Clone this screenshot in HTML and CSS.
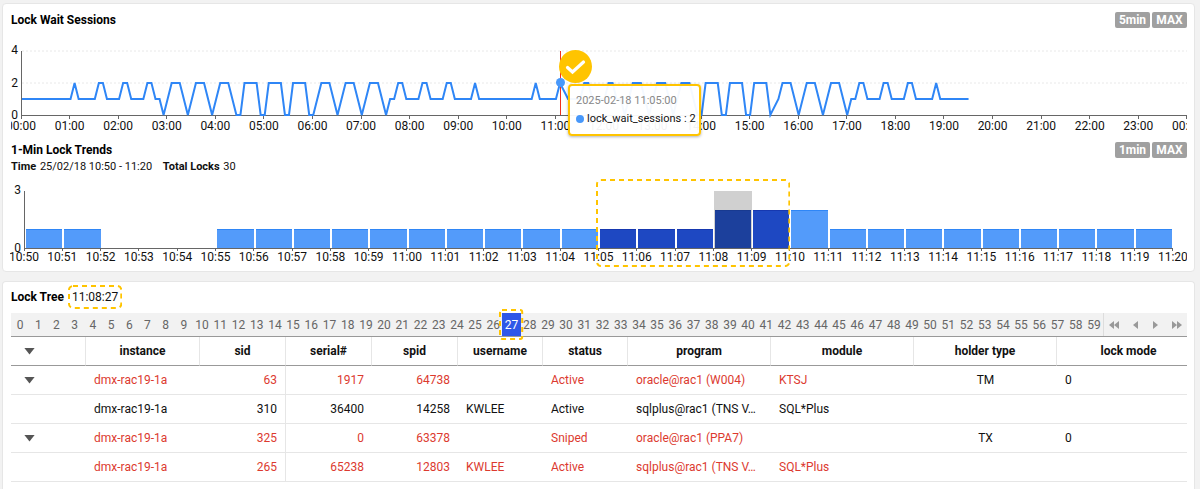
FILE: index.html
```html
<!DOCTYPE html>
<html lang="en">
<head>
<meta charset="utf-8">
<title>Lock Tree</title>
<link rel="stylesheet" href="styles.css">
</head>
<body>
<main class="page">
  <section class="card charts">
    <header class="head">
      <h2 class="title">Lock Wait Sessions</h2>
      <div class="badges"><button class="badge">5min</button><button class="badge">MAX</button></div>
    </header>
    <div class="chart line-chart">
      <div class="y-axis"><span>4</span><span>2</span><span>0</span></div>
      <div class="plot line-plot">
        <svg class="series" viewBox="0 0 288 4" preserveAspectRatio="none" aria-hidden="true">
          <path class="guide" d="M0 0H288M0 2H288"/>
          <polyline class="wave" id="wave"/>
        </svg>
        <div class="cursor">
          <span class="point"></span>
          <svg class="check" viewBox="0 0 33 33" aria-hidden="true"><circle cx="16.500" cy="16.500" r="16.500" fill="#ffc400"/><path d="M8.500 17.500L13.500 22L24.500 12" fill="none" stroke="#fff" stroke-width="3.200" stroke-linecap="round"/></svg>
          <div class="tooltip" role="tooltip">
            <div class="tip-time">2025-02-18 11:05:00</div>
            <div class="tip-row"><span class="dot"></span>lock_wait_sessions : 2</div>
          </div>
        </div>
      </div>
      <div class="x-axis hours"><div class="labels" id="hours"></div></div>
    </div>
    <header class="head second">
      <h2 class="title">1-Min Lock Trends</h2>
      <div class="badges"><button class="badge">1min</button><button class="badge">MAX</button></div>
    </header>
    <p class="summary"><b>Time</b> 25/02/18 10:50 - 11:20 <b class="total">Total Locks</b> 30</p>
    <div class="chart bar-chart">
      <div class="y-axis"><span>3</span><span>0</span></div>
      <div class="plot bar-plot">
        <div class="bars" id="bars"></div>
        <svg class="range" aria-hidden="true"><rect class="dash" x="1" y="1" rx="4"/></svg>
      </div>
      <div class="x-axis"><div class="labels" id="minutes"></div></div>
    </div>
  </section>

  <section class="card tree">
    <header class="tree-head"><h2 class="title">Lock Tree</h2><span class="time">11:08:27<svg class="outline" aria-hidden="true"><rect class="dash" x="1" y="1" rx="4"/></svg></span></header>
    <div class="seconds">
      <div class="ticks" id="ticks"></div>
      <nav class="pager" aria-label="Time navigation">
        <button aria-label="First"><svg width="10" height="8"><path d="M5 0V8L0 4ZM10 0V8L5 4Z"/></svg></button>
        <button aria-label="Previous"><svg width="5" height="8"><path d="M5 0V8L0 4Z"/></svg></button>
        <button aria-label="Next"><svg width="5" height="8"><path d="M0 0V8L5 4Z"/></svg></button>
        <button aria-label="Last"><svg width="10" height="8"><path d="M0 0V8L5 4ZM5 0V8L10 4Z"/></svg></button>
      </nav>
    </div>
    <div class="table-wrap">
      <table class="grid">
        <colgroup><col class="c-tree"><col class="c-inst"><col class="c-num"><col class="c-num"><col class="c-num"><col class="c-text"><col class="c-text"><col class="c-wide"><col class="c-wide"><col class="c-wide"><col></colgroup>
        <thead><tr><th><button class="toggle" aria-label="Toggle all"></button></th><th>instance</th><th>sid</th><th>serial#</th><th>spid</th><th>username</th><th>status</th><th>program</th><th>module</th><th>holder type</th><th>lock mode</th></tr></thead>
        <tbody>
          <tr class="alert"><td><button class="toggle" aria-label="Toggle row"></button></td><td>dmx-rac19-1a</td><td class="num sid">63</td><td class="num">1917</td><td class="num">64738</td><td></td><td>Active</td><td>oracle@rac1 (W004)</td><td>KTSJ</td><td class="holder">TM</td><td class="mode">0</td></tr>
          <tr><td></td><td>dmx-rac19-1a</td><td class="num sid">310</td><td class="num">36400</td><td class="num">14258</td><td>KWLEE</td><td>Active</td><td>sqlplus@rac1 (TNS V…</td><td>SQL*Plus</td><td></td><td></td></tr>
          <tr class="alert"><td><button class="toggle" aria-label="Toggle row"></button></td><td>dmx-rac19-1a</td><td class="num sid">325</td><td class="num">0</td><td class="num">63378</td><td></td><td>Sniped</td><td>oracle@rac1 (PPA7)</td><td></td><td class="holder">TX</td><td class="mode">0</td></tr>
          <tr class="alert"><td></td><td>dmx-rac19-1a</td><td class="num sid">265</td><td class="num">65238</td><td class="num">12803</td><td>KWLEE</td><td>Active</td><td>sqlplus@rac1 (TNS V…</td><td>SQL*Plus</td><td></td><td></td></tr>
        </tbody>
      </table>
    </div>
  </section>
</main>
<script src="app.js"></script>
</body>
</html>
```
FILE: styles.css
```css
* { box-sizing: border-box; }
body { margin: 0; background: #f2f2f2; color: #111; font: 12px/16px Roboto, "Liberation Sans", sans-serif; }
button { margin: 0; padding: 0; border: 0; background: none; font: inherit; color: inherit; }
.page { display: flex; flex-direction: column; gap: 9px; min-height: 100vh; padding: 3px 5px 0 2px; }
.card { background: #fff; border: 1px solid #e6e6e6; border-radius: 4px; padding: 8px 7px 8px 8px; }
.tree { flex: 1; padding: 4px 7px 0 8px; border-bottom: 0; border-radius: 4px 4px 0 0; }
.title { margin: 0; font-size: 12px; line-height: 16px; font-weight: 700; color: #000; }
.head { display: flex; justify-content: space-between; align-items: center; }
.badges { display: flex; gap: 2px; }
.badge { height: 16px; min-width: 35px; border-radius: 2px; background: #a0a0a0; color: #fff; font-weight: 700; line-height: 16px; }

.chart { display: grid; }
.line-chart { grid-template-columns: 10px 1fr; margin-top: 23px; }
.bar-chart { grid-template-columns: 13px 1fr; margin-top: 16px; padding-right: 14px; }
.y-axis { display: flex; flex-direction: column; justify-content: space-between; margin: -9px 3px -7px 0; text-align: right; }
.plot { position: relative; border-left: 1px solid #666; border-bottom: 1px solid #666; }
.line-plot { height: 65px; }
.bar-plot { height: 58px; }
.series { display: block; width: 100%; height: 64px; overflow: visible; }
.guide { stroke: #e8e8e8; stroke-width: 1; stroke-dasharray: 2 2; vector-effect: non-scaling-stroke; }
.wave { fill: none; stroke: #2f86f6; stroke-width: 2; vector-effect: non-scaling-stroke; }
.x-axis { grid-column: 1 / -1; overflow: hidden; }
.line-chart .x-axis { padding-left: 10px; }
.bar-chart .x-axis { margin-right: -14px; margin-left: -1px; padding: 0 14px; }
.labels { display: flex; }
.labels span { flex: 1 1 0; display: flex; flex-direction: column; align-items: center; white-space: nowrap; }
.labels span::before { content: ""; width: 1px; height: 3px; background: #666; }
.hours .labels { margin: 0 calc(-100% / 48); line-height: 14px; }
.bar-chart .labels { margin: 0 calc(-100% / 60); line-height: 12px; }
.bar-chart .labels span::before { height: 2px; }

.cursor { position: absolute; top: 0; bottom: 0; left: calc(100% * 133 / 288); border-left: 1px solid #f03020; }
.point { position: absolute; top: 27px; left: -5px; width: 9px; height: 9px; border-radius: 50%; background: #4898fa; }
.check { position: absolute; left: -2px; top: -1px; width: 33px; height: 33px; }
.tooltip { position: absolute; left: 7px; top: 33px; width: 133px; padding: 6px; border: 2px solid #ffc400; border-radius: 4px; background: rgba(255, 255, 255, .95); box-shadow: 0 1px 3px rgba(0, 0, 0, .3); white-space: nowrap; font-size: 11px; line-height: 18px; }
.tip-time { color: #888; }
.tip-row { display: flex; align-items: center; gap: 3px; }
.dot { flex: none; width: 8px; height: 8px; border-radius: 50%; background: #4898fa; }

.second { margin-top: 9px; }
.summary { margin: 1px 0 0; font-size: 11px; }
.summary b { margin-right: 1px; }
.summary .total { margin-left: 8px; }
.bars { display: grid; grid-template-columns: repeat(30, 1fr); align-items: end; height: 57px; }
.bar { margin: 0 1px; background: #539bfa; border-top: 1px solid #2f86f6; }
.bar.picked { background: #1e48c2; border-color: #1638b0; }
.bar.hot { background: #1c409c; border-color: #183a90; }
.slot { display: flex; flex-direction: column; justify-content: flex-end; height: 100%; }
.slot.hover { background: #d0d0d0; }
.range { position: absolute; left: calc(50% - 3px); top: -12px; width: calc(100% / 6 + 3px); height: 88px; }
.dash { width: calc(100% - 2px); height: calc(100% - 2px); fill: none; stroke: #ffc400; stroke-width: 2; stroke-dasharray: 5 4; }

.tree-head { display: flex; align-items: center; gap: 8px; height: 22px; }
.time { position: relative; }
.outline { position: absolute; left: -4px; top: -4px; width: calc(100% + 8px); height: 24px; }
.seconds { display: flex; margin-top: 5px; height: 24px; background: #f2f2f2; border-bottom: 1px solid #999; color: #666; }
.ticks { flex: 1; display: grid; grid-template-columns: repeat(60, 1fr); }
.ticks button { position: relative; line-height: 22px; }
.ticks .on { background: #2f57e8; color: #fff; }
.ticks .outline { left: -3px; top: -4px; width: calc(100% + 6px); height: 31px; }
.pager { display: flex; width: 84px; border-left: 1px solid #ddd; }
.pager button { flex: 1; display: flex; align-items: center; justify-content: center; fill: #999; }

.table-wrap { overflow: hidden; }
.grid { width: calc(100% + 14px); table-layout: fixed; border-collapse: separate; border-spacing: 0; }
.c-tree { width: 75px; }
.c-inst { width: 114px; }
.c-num { width: 86px; }
.c-text { width: 85px; }
.c-wide { width: 143px; }
.grid th, .grid td { height: 29px; padding: 0 8px; border-bottom: 1px solid #e6e6e6; text-align: left; white-space: nowrap; overflow: hidden; }
.grid th { border-bottom-color: #999; border-right: 1px solid #e6e6e6; text-align: center; color: #111; }
.grid th:first-child, .grid td:first-child { padding: 0 13px; text-align: left; }
.grid .num { text-align: right; }
.grid .sid { border-right: 1px solid #e6e6e6; }
.grid .holder { text-align: center; }
.alert { color: #dc3a2f; }
.alert .holder, .alert .mode { color: #111; }
.toggle { display: block; width: 11px; height: 7px; background: #555; clip-path: polygon(0 0, 100% 0, 50% 100%); }
```
FILE: app.js
```js
const wave = [
  [0,1],[12,1],[13,2],[14,1],[18,1],[19,2],[20,2],[21,1],[24,1],[25,2],[26,2],[27,1],[30,1],[31,2],[32,2],[33,1],[34,1],[35,0],
  [37,2],[39,2],[41,0],[43,2],[45,2],[47,0],[49,2],[51,2],[53,0],[54,0],[55,2],[58,2],[59,0],[60,0],[61,2],[64,2],[65,0],[66,0],
  [67,2],[70,2],[71,0],[72,0],[74,2],[76,2],[78,0],[80,2],[82,2],[84,0],[86,2],[88,2],[90,0],[91,1],[92,1],[93,2],[94,2],[95,1],
  [98,1],[99,2],[100,2],[101,1],[104,1],[105,2],[106,2],[107,1],[111,1],[112,2],[113,1],[126,1],[127,2],[128,1],[132,1],[133,2],
  [135,1],[138,1],[139,2],[140,2],[141,1],[144,1],[145,2],[146,2],[147,1],[148,1],[149,0],[151,2],[153,2],[155,0],[157,2],[159,2],
  [161,0],[163,2],[165,2],[167,0],[168,0],[169,2],[172,2],[173,0],[174,0],[175,2],[178,2],[179,0],[180,0],[181,2],[184,2],[185,0],
  [187,1],[188,2],[190,2],[192,0],[194,2],[196,2],[198,0],[200,2],[202,2],[204,0],[205,1],[206,1],[207,2],[208,2],[209,1],[212,1],
  [213,2],[214,2],[215,1],[218,1],[219,2],[220,2],[221,1],[225,1],[226,2],[227,1],[234,1]
];
const counts = [1,1,0,0,0,1,1,1,1,1,1,1,1,1,1,1,1,1,2,2,2,1,1,1,1,1,1,1,1,1];
const pad = n => String(n).padStart(2, "0");
const put = (id, html) => { document.getElementById(id).innerHTML = html; };

document.getElementById("wave").setAttribute("points", wave.map(([x, v]) => x + "," + (4 - v)).join(" "));
put("hours", Array.from({ length: 25 }, (_, h) => `<span>${pad(h % 24)}:00</span>`).join(""));
put("minutes", Array.from({ length: 31 }, (_, i) => `<span>${pad(10 + Math.floor((50 + i) / 60))}:${pad((50 + i) % 60)}</span>`).join(""));
put("bars", counts.map((n, i) => {
  const kind = i === 18 ? " hot" : i >= 15 && i < 20 ? " picked" : "";
  const bar = n ? `<div class="bar${kind}" style="height:${n / 3 * 100}%"></div>` : "";
  return `<div class="slot${i === 18 ? " hover" : ""}">${bar}</div>`;
}).join(""));
put("ticks", Array.from({ length: 60 }, (_, s) => s === 27
  ? `<button class="on" aria-current="true">27<svg class="outline" aria-hidden="true"><rect class="dash" x="1" y="1" rx="2"/></svg></button>`
  : `<button>${s}</button>`).join(""));
```
